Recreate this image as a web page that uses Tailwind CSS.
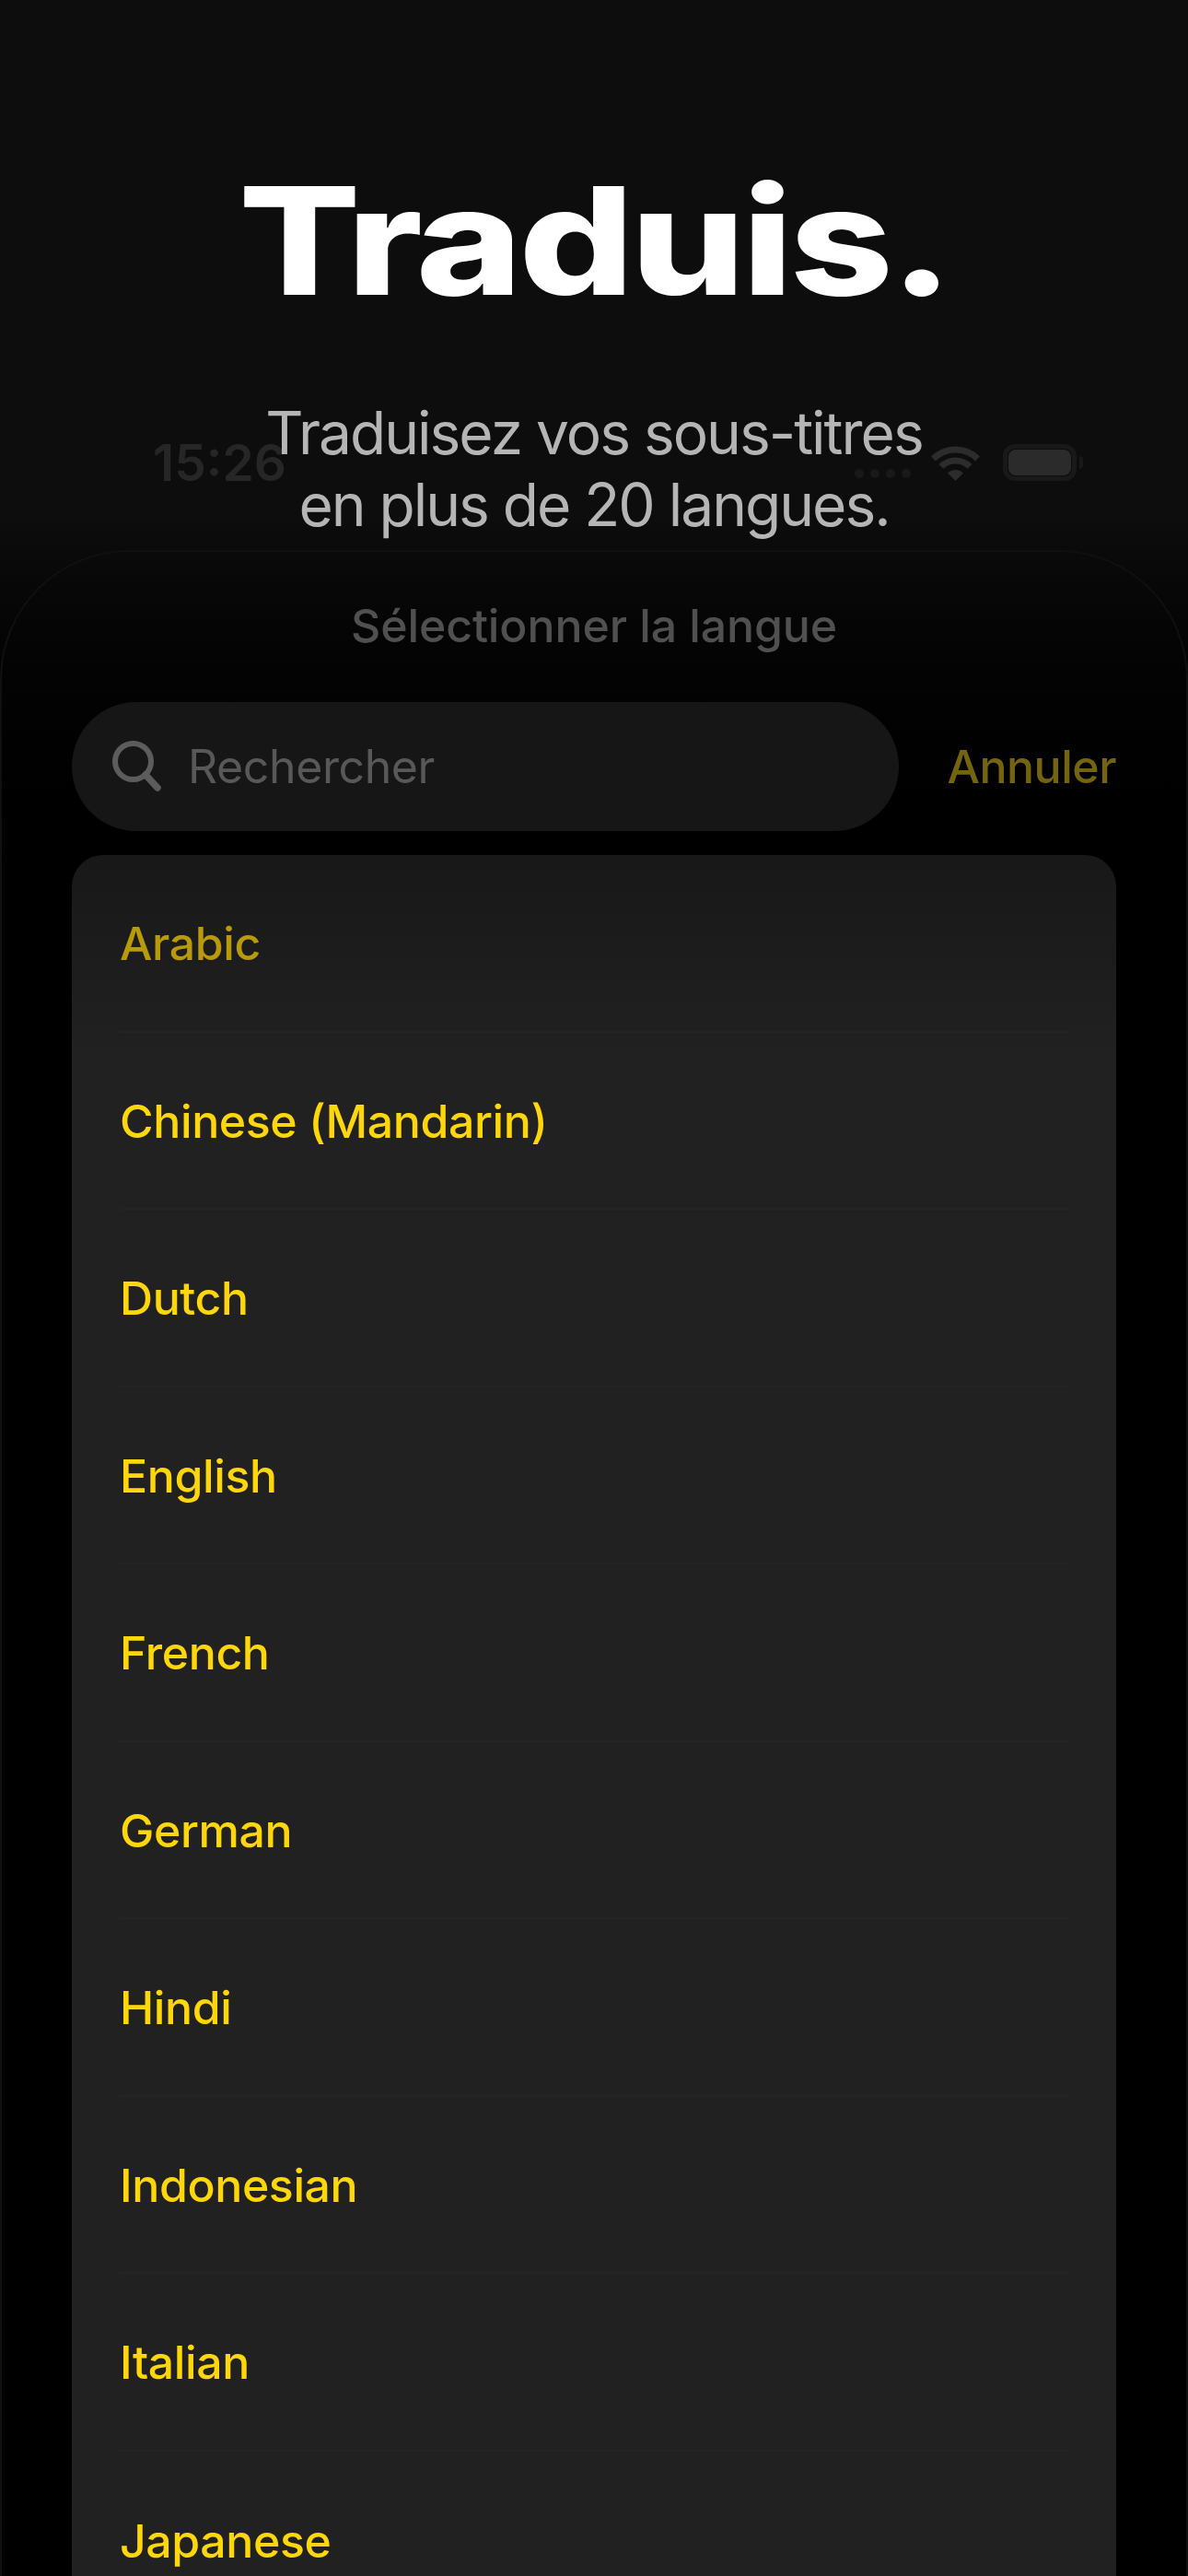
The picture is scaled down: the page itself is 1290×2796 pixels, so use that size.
<!DOCTYPE html>
<html lang="fr">
<head>
  <meta charset="UTF-8" />
  <meta name="viewport" content="width=device-width, initial-scale=1.0" />
  <title>Traduis</title>
  <script src="https://cdn.jsdelivr.net/npm/@tailwindcss/browser@4"></script>
</head>
<body class="relative w-[1290px] h-[2796px] overflow-hidden bg-linear-to-b from-[#0d0d0d] from-[20%] to-black to-[36%] font-['Inter',sans-serif]">

  <!-- STATUS BAR, sits behind the headline -->
  <div class="absolute top-[476px] left-0 w-full h-[52px] flex items-center justify-between pl-[166px] pr-[114px] text-[#262626]">
    <span class="text-[55px] leading-[52px] font-semibold">15:26</span>
    <div class="flex items-center">
      <div class="flex gap-[7px] mt-[24px] mr-[22px]">
        <div class="w-[10px] h-[10px] rounded-full bg-[#191919]"></div>
        <div class="w-[10px] h-[10px] rounded-full bg-[#191919]"></div>
        <div class="w-[10px] h-[10px] rounded-full bg-[#191919]"></div>
        <div class="w-[10px] h-[10px] rounded-full bg-[#191919]"></div>
      </div>
      <svg class="w-[53px] h-[40px] mr-[25px]" viewBox="0 0 53 40" fill="none">
        <path d="M2.5 16A34 34 0 0 1 50.5 16" stroke="#2c2c2c" stroke-width="7"/>
        <path d="M10.9 24.4A22 22 0 0 1 42.1 24.4" stroke="#2c2c2c" stroke-width="7"/>
        <path d="M26.5 40L18 31.5A12 12 0 0 1 35 31.5Z" fill="#2c2c2c"/>
      </svg>
      <div class="w-[80px] h-[40px] rounded-[13px] border-[5px] border-[#191919] p-[1px]">
        <div class="w-full h-full rounded-[8px] bg-[#2b2b2b]"></div>
      </div>
      <div class="w-[4px] h-[14px] ml-[3px] rounded-r-full bg-[#191919]"></div>
    </div>
  </div>

  <!-- HEADLINE -->
  <header class="relative h-[597px] flex flex-col items-center text-center">
    <h1 class="mt-[176px] text-[162px] leading-[170px] font-[850] text-white tracking-[-3px] scale-x-[1.21]">Traduis.</h1>
    <p class="mt-[85px] text-[64px] leading-[78px] text-[#b5b5b5] tracking-[-2px]">Traduisez vos sous-titres<br>en plus de 20 langues.</p>
  </header>

  <!-- SHEET -->
  <main class="h-[2199px] rounded-t-[140px] border-t-2 border-x-2 border-[#101010] px-[76px]">
    <h2 class="mt-[46px] text-center text-[50px] leading-[68px] font-medium text-[#505050] tracking-[-.1px]">Sélectionner la langue</h2>

    <div class="mt-[49px] flex items-center justify-between">
      <div class="w-[898px] h-[140px] rounded-full bg-[#161616] flex items-center pl-[44px] gap-[28px]">
        <svg class="w-[54px] h-[56px]" viewBox="0 0 54 56" fill="none" stroke="#5c5c5c">
          <circle cx="22.5" cy="22.5" r="19.5" stroke-width="6"/>
          <path d="M36 37L49 51" stroke-width="7.5" stroke-linecap="round"/>
        </svg>
        <span class="text-[50px] leading-[60px] text-[#585858] tracking-[-.4px]">Rechercher</span>
      </div>
      <button class="text-[50px] leading-[60px] font-medium text-[#75640f] tracking-[-.5px]">Annuler</button>
    </div>

    <ul class="mt-[26px] rounded-t-[34px] bg-linear-to-b from-[#181818] to-[#212121] to-[220px] px-[52px] text-[50px] font-[450] tracking-[-.4px] text-[#ffd60a]">
      <li class="h-[192.5px] pt-[3px] flex items-center border-b-2 border-[#242424] text-[#b89a0a]">Arabic</li>
      <li class="h-[192.5px] pt-[3px] flex items-center border-b-2 border-[#242424]">Chinese (Mandarin)</li>
      <li class="h-[192.5px] pt-[3px] flex items-center border-b-2 border-[#242424]">Dutch</li>
      <li class="h-[192.5px] pt-[3px] flex items-center border-b-2 border-[#242424]">English</li>
      <li class="h-[192.5px] pt-[3px] flex items-center border-b-2 border-[#242424]">French</li>
      <li class="h-[192.5px] pt-[3px] flex items-center border-b-2 border-[#242424]">German</li>
      <li class="h-[192.5px] pt-[3px] flex items-center border-b-2 border-[#242424]">Hindi</li>
      <li class="h-[192.5px] pt-[3px] flex items-center border-b-2 border-[#242424]">Indonesian</li>
      <li class="h-[192.5px] pt-[3px] flex items-center border-b-2 border-[#242424]">Italian</li>
      <li class="h-[192.5px] pt-[3px] flex items-center">Japanese</li>
    </ul>
  </main>

</body>
</html>
